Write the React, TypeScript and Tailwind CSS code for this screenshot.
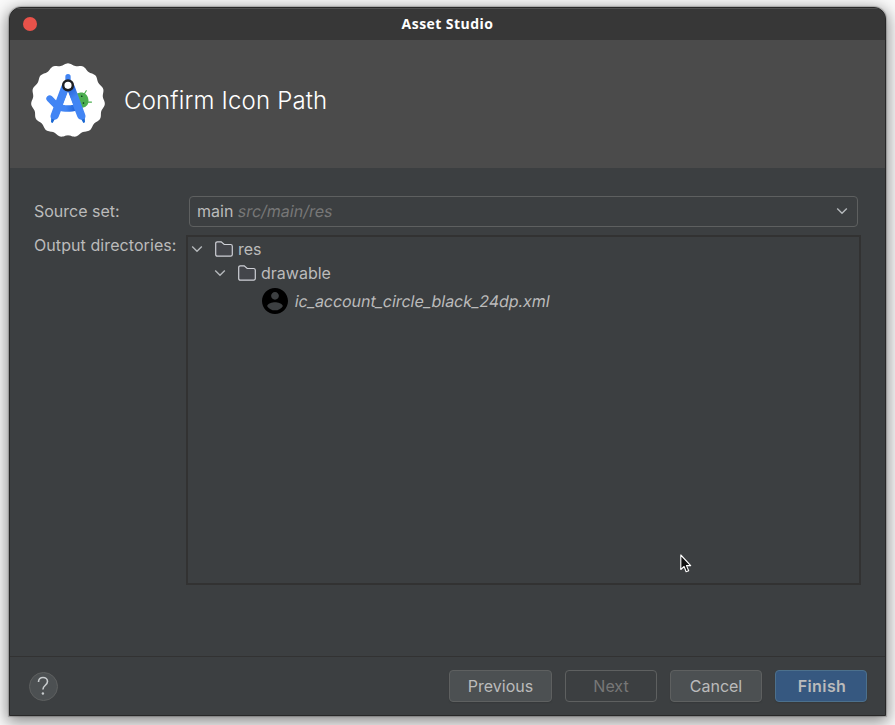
import type { ReactNode } from "react";

const badgePath = (() => {
  const points: string[] = [];
  for (let i = 0; i < 240; i++) {
    const a = (i / 240) * Math.PI * 2;
    const r = 108 + 3 * Math.cos(15 * a);
    points.push(`${(132 + r * Math.sin(a)).toFixed(2)} ${(133 - r * Math.cos(a)).toFixed(2)}`);
  }
  return `M${points.join("L")}Z`;
})();

function StudioLogo() {
  return (
    <svg viewBox="0 0 270 270" className="h-[90px] w-[90px] shrink-0">
      <defs>
        <linearGradient id="leg" x1="0" y1="0" x2="0.4" y2="1">
          <stop offset="0" stopColor="#1a56c8" />
          <stop offset="0.45" stopColor="#4285f4" />
        </linearGradient>
        <linearGradient id="arc" x1="0" y1="0" x2="1" y2="0">
          <stop offset="0.4" stopColor="#4285f4" />
          <stop offset="1" stopColor="#1a5fd6" />
        </linearGradient>
      </defs>
      <path d={badgePath} fill="#fff" />
      <g transform="rotate(-14 178 131)">
        <path d="M157 108h18c12 2 18 11 18 23s-6 21-18 23h-14z" fill="#4caf50" />
        <path d="M185 115l8-8M191 142l9 2" stroke="#4caf50" strokeWidth="3.500" strokeLinecap="round" />
        <circle cx="176" cy="120" r="2.5" fill="#0b3d20" />
        <circle cx="176" cy="141" r="2.5" fill="#0b3d20" />
      </g>
      <path d="M77 128L94 145" fill="none" stroke="#4285f4" strokeWidth="20" strokeLinecap="round" />
      <path d="M104 146h56v17c-18 6-40 6-58 0z" fill="url(#arc)" />
      <path d="M124 62q0-8 8-8t8 8v16h-16z" fill="#4285f4" />
      <path d="M82 181h15l-11 20-5-2zM182 181h-15l11 20 5-2z" fill="#1967d2" />
      <path d="M113 88l22 14-31 80c-3 8-11 11-18 8-7-3-8-9-5-16z" fill="#4285f4" />
      <path d="M151 88l-22 14 31 80c3 8 11 11 18 8 7-3 8-9 5-16z" fill="url(#leg)" />
      <path d="M132 107L147 146Q132 149 117 146Z" fill="#fff" />
      <circle cx="132" cy="88" r="14.5" fill="#fff" stroke="#202124" strokeWidth="7.500" />
    </svg>
  );
}

function Chevron({ className }: { className: string }) {
  return (
    <svg viewBox="0 0 12 8" className={`h-2 w-3 shrink-0 ${className}`}>
      <path d="M1.2 1.4L6 6.200l4.800-4.800" fill="none" stroke="#b4b8bb" strokeWidth="1.4" />
    </svg>
  );
}

function Folder({ className }: { className: string }) {
  return (
    <svg viewBox="0 0 18 16" className={`h-4 w-[18px] shrink-0 ${className}`}>
      <path
        d="M.7 2.500Q.7.8 2.400.8H6.200L9.200 3.500H15.600Q17.300 3.500 17.300 5.200V13.500Q17.300 15.200 15.600 15.200H2.400Q.7 15.200.7 13.500Z"
        fill="#43454a"
        stroke="#ced0d6"
        strokeWidth="1.2"
      />
    </svg>
  );
}

function Account() {
  return (
    <svg viewBox="2 2 20 20" className="ml-[74px] h-[26px] w-[26px] shrink-0">
      <path d="M12 2C6.480 2 2 6.480 2 12s4.480 10 10 10 10-4.480 10-10S17.520 2 12 2zm0 3c1.660 0 3 1.340 3 3s-1.340 3-3 3-3-1.340-3-3 1.340-3 3-3zm0 14.200c-2.500 0-4.710-1.280-6-3.220.030-1.990 4-3.080 6-3.080 1.990 0 5.970 1.090 6 3.080-1.290 1.940-3.500 3.220-6 3.220z" />
    </svg>
  );
}

function Button({ className, children }: { className: string; children: ReactNode }) {
  return (
    <button className={`flex h-8 items-center justify-center rounded-[4px] border pb-px text-[16px] ${className}`}>
      {children}
    </button>
  );
}

export default function App() {
  return (
    <div className="h-[725px] w-[895px] overflow-hidden bg-[#fafafa] pt-[7px] pl-[9px] font-['Inter',sans-serif] text-[16px] text-[#bbbbbb]">
      <div className="relative flex h-[709px] w-[877px] flex-col overflow-hidden rounded-t-[12px] border border-[#282828] bg-[#3c3f41] shadow-[0_0_1px_1px_rgba(0,0,0,0.2),0_4px_16px_2px_rgba(0,0,0,0.45)]">
        <div className="flex h-8 shrink-0 items-center border-t border-[#505050] bg-[#373737] pb-[2px]">
          <div className="ml-[13px] h-[14px] w-[14px] rounded-full bg-[#e9524a]" />
          <div className="mr-[27px] flex-1 text-center font-['Open_Sans',sans-serif] text-[14px] font-bold tracking-[0.450px] text-white">
            Asset Studio
          </div>
        </div>
        <header className="flex h-32 shrink-0 items-start bg-[#4b4b4b] pt-4 pl-[14px]">
          <StudioLogo />
          <h1 className="mt-[27px] ml-[10px] text-[24px] leading-9 font-[350] tracking-[0.160px] text-white">Confirm Icon Path</h1>
        </header>
        <main className="flex-1 pt-[27px] pl-6">
          <div className="flex h-[31px] items-center">
            <label className="w-[155px]">Source set:</label>
            <div className="mt-px flex h-[31px] w-[669px] items-center rounded-[4px] border border-[#5e6060] pb-px pl-[7px]">
              <span>main</span>
              <span className="ml-[5px] flex-1 text-[#777777]">
                <span className="inline-block -skew-x-10">src/main/res</span>
              </span>
              <Chevron className="mt-px mr-[9px]" />
            </div>
          </div>
          <div className="mt-[9px] flex">
            <label className="w-[152px] leading-5 tracking-[0.080px]">Output directories:</label>
            <div className="h-[350px] w-[675px] border-2 border-[#323232]">
              <div className="flex h-6 items-center">
                <Chevron className="ml-[3px]" />
                <Folder className="ml-3" />
                <span className="ml-[5px]">res</span>
              </div>
              <div className="flex h-6 items-center">
                <Chevron className="ml-[26px]" />
                <Folder className="ml-3" />
                <span className="ml-[5px]">drawable</span>
              </div>
              <div className="flex h-8 items-center">
                <Account />
                <span className="ml-[7px] inline-block -skew-x-10 tracking-[-0.040px]">ic_account_circle_black_24dp.xml</span>
              </div>
            </div>
          </div>
        </main>
        <footer className="flex h-[59px] shrink-0 items-center border-t border-[#323232] pr-[18px] pl-[19px]">
          <button className="flex h-[29px] w-[29px] items-center justify-center rounded-full border border-[#5e6060] bg-[#4c5052]">
            <svg viewBox="0 0 12 20" className="mr-[2px] h-5 w-3">
              <path d="M1.500 6C1.500 3.200 3.500 1.500 6 1.500s4.500 1.700 4.500 4.100c0 3.600-4.600 3.800-4.600 7.900" fill="none" stroke="#c8ccce" strokeWidth="1.600" />
              <circle cx="5.900" cy="17.500" r="1.200" fill="#c8ccce" />
            </svg>
          </button>
          <div className="ml-auto flex gap-[13px]">
            <Button className="w-[103px] border-[#5e6060] bg-[#4c5052] shadow-[0_1px_1px_#36393b]">Previous</Button>
            <Button className="w-[92px] border-[#5e6060] text-[#777777]">Next</Button>
            <Button className="w-[92px] border-[#5e6060] bg-[#4c5052] shadow-[0_1px_1px_#36393b]">Cancel</Button>
            <Button className="w-[92px] border-[#4c708c] bg-[#365880] pl-[2px] font-semibold tracking-[0.400px] shadow-[0_1px_1px_#36393b]">Finish</Button>
          </div>
        </footer>
      </div>
      <svg viewBox="0 0 12 20" className="absolute top-[554px] left-[680px] h-5 w-3">
        <path d="M.8 1v14.500l3.300-3 2 5.200 2.600-1-2.200-5.100h4.200z" fill="#111" stroke="#fff" strokeWidth="1.100" strokeLinejoin="round" />
      </svg>
    </div>
  );
}
